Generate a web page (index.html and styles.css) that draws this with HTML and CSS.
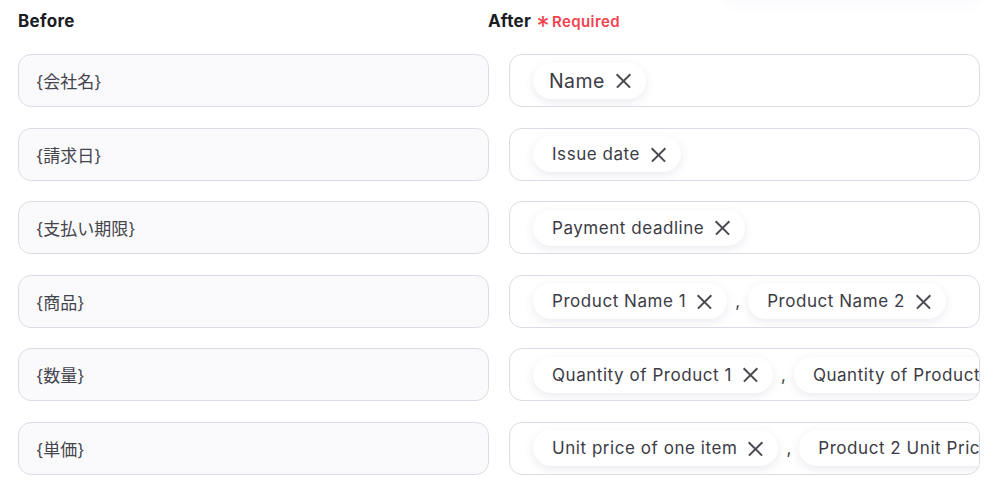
FILE: index.html
```html
<!DOCTYPE html>
<html lang="ja">
<head>
  <meta charset="UTF-8" />
  <title>Mapping</title>
  <link rel="stylesheet" href="styles.css">
</head>
<body>
  <div class="top-shadow"></div>
  <div class="mapping">
    <div class="heads">
      <div class="head">Before</div>
      <div class="head">After <span class="req"><span class="star">*</span>Required</span></div>
    </div>

    <div class="row">
      <div class="before">{会社名}</div>
      <div class="after">
        <span class="chip big">Name <span class="x"></span></span>
      </div>
    </div>

    <div class="row">
      <div class="before">{請求日}</div>
      <div class="after">
        <span class="chip">Issue date <span class="x"></span></span>
      </div>
    </div>

    <div class="row">
      <div class="before">{支払い期限}</div>
      <div class="after">
        <span class="chip">Payment deadline <span class="x"></span></span>
      </div>
    </div>

    <div class="row">
      <div class="before">{商品}</div>
      <div class="after">
        <span class="chip">Product Name 1 <span class="x"></span></span>
        <span class="comma">,</span>
        <span class="chip">Product Name 2 <span class="x"></span></span>
      </div>
    </div>

    <div class="row">
      <div class="before">{数量}</div>
      <div class="after">
        <span class="chip">Quantity of Product 1 <span class="x"></span></span>
        <span class="comma">,</span>
        <span class="chip">Quantity of Product 2 <span class="x"></span></span>
      </div>
    </div>

    <div class="row">
      <div class="before">{単価}</div>
      <div class="after">
        <span class="chip">Unit price of one item <span class="x"></span></span>
        <span class="comma">,</span>
        <span class="chip">Product 2 Unit Price <span class="x"></span></span>
      </div>
    </div>
  </div>
</body>
</html>
```

FILE: styles.css
```css
* {
  box-sizing: border-box;
  margin: 0;
  padding: 0;
}

body {
  font-family: 'Inter', 'Noto Sans CJK JP', sans-serif;
  background: #fff;
  color: #333;
  overflow: hidden;
}

.top-shadow {
  position: absolute;
  top: -30px;
  left: 725px;
  width: 255px;
  height: 30px;
  border-radius: 14px;
  box-shadow: 0 3px 14px rgba(120, 110, 170, 0.06);
}

.mapping {
  padding: 10px 20px 0 18px;
}

.heads {
  display: grid;
  grid-template-columns: 470px 1fr;
  height: 44px;
}

.head {
  font-size: 17px;
  font-weight: 700;
  letter-spacing: 0.3px;
  color: #1c1c24;
  line-height: 22px;
}

.req {
  color: #f0434e;
  font-size: 15px;
  font-weight: 600;
  letter-spacing: 0.4px;
}

.star {
  display: inline-block;
  font-size: 26px;
  font-weight: 400;
  vertical-align: -8px;
  margin: 0 2px 0 1px;
  line-height: 14px;
}

.row {
  display: grid;
  grid-template-columns: 471px 471px;
  gap: 20px;
  margin-bottom: 20.6px;
}

.before,
.after {
  height: 53px;
  border: 1px solid #dcdce6;
  border-radius: 13px;
  display: flex;
  align-items: center;
}

.before {
  background: #faf9fc;
  padding-left: 17px;
  font-size: 17px;
  color: #44444c;
}

.after {
  background: #fff;
  padding-left: 23px;
  gap: 7px;
  overflow: hidden;
  white-space: nowrap;
}

.chip {
  display: inline-flex;
  align-items: center;
  flex-shrink: 0;
  height: 36px;
  padding: 0 15px 0 19px;
  border-radius: 18px;
  background: #fff;
  box-shadow: 0 3px 10px rgba(90, 80, 130, 0.12);
  font-size: 17px;
  letter-spacing: 0.55px;
  color: #3c3c46;
}

.chip.big {
  font-size: 19.5px;
  letter-spacing: 0.4px;
  padding-left: 16px;
}

.x {
  position: relative;
  display: inline-block;
  width: 15px;
  height: 15px;
  margin-left: 11px;
}

.x::before,
.x::after {
  content: "";
  position: absolute;
  left: -2px;
  top: 7px;
  width: 19px;
  height: 1.6px;
  background: #4a4a52;
  transform: rotate(45deg);
}

.x::after {
  transform: rotate(-45deg);
}

.comma {
  font-size: 17px;
  color: #3c3c46;
  margin: 0 1px;
}
```
